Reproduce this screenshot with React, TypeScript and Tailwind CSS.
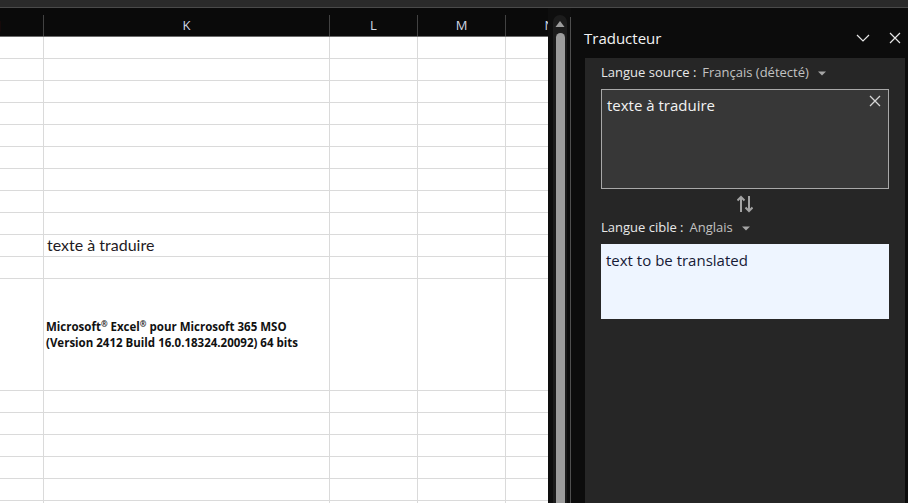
import React from 'react';

const GRID = 'grid grid-cols-[89px_286px_88px_88px_88px]';
const LABELS = ['J', 'K', 'L', 'M', 'N'];

function Row({ h, k }: { h: string; k?: React.ReactNode }) {
  return (
    <div className={GRID}>
      {LABELS.map((l) => (
        <div key={l} className={`${h} border-r border-b border-[#dadada] bg-white`}>
          {l === 'K' ? k : null}
        </div>
      ))}
    </div>
  );
}

function Sheet() {
  const rows: React.ReactNode[] = [];
  for (let i = 0; i < 11; i++) {
    rows.push(
      <Row
        key={`a${i}`}
        h="h-[22px]"
        k={
          i === 9 ? (
            <div className="flex h-full items-end pl-[3px] pb-[1px] text-[16px] leading-[20px] text-[#1f1b24] [font-family:Lato,'Liberation_Sans',sans-serif]">
              texte à traduire
            </div>
          ) : null
        }
      />
    );
  }
  rows.push(
    <Row
      key="big"
      h="h-[112px]"
      k={
        <div className="flex h-full flex-col justify-center pl-[2px] text-[11.5px] font-bold leading-[16px] text-[#111] [font-family:'Open_Sans',sans-serif]">
          <div>
            Microsoft<sup className="text-[8px]">®</sup> Excel<sup className="text-[8px]">®</sup> pour Microsoft 365 MSO
          </div>
          <div>(Version 2412 Build 16.0.18324.20092) 64 bits</div>
        </div>
      }
    />
  );
  for (let i = 0; i < 6; i++) rows.push(<Row key={`b${i}`} h="h-[22px]" />);

  return (
    <div className="w-[548px] overflow-hidden">
      <div className="ml-[-45px] w-[640px]">
        <div className={`${GRID} h-[29px] border-b border-[#6b6b6b] bg-[#0a0a0a]`}>
          {LABELS.map((l) => (
            <div key={l} className="flex">
              <div className="flex flex-1 items-end justify-center pb-[2px] text-[13px] leading-[18px] text-[#cfd6e2] [font-family:'Open_Sans',sans-serif]">
                {l}
              </div>
              <div className="mt-[7px] w-px bg-[#424242]" />
            </div>
          ))}
        </div>
        {rows}
      </div>
    </div>
  );
}

function ScrollBar() {
  return (
    <div className="flex w-[23px] bg-[#0e0e0e]">
      <div className="ml-[5px] mt-[7px] flex w-[14px] flex-col items-center rounded-t-full bg-[#1c1c1c]">
        <svg width="10" height="8" viewBox="0 0 10 8" className="mt-[5px]">
          <path d="M5 1 L9.5 7 L0.5 7 Z" fill="#9d9d9d" />
        </svg>
        <div className="mt-[5px] w-[9px] flex-1 rounded-t-full bg-[#9d9d9d]" />
      </div>
      <div className="ml-auto mt-[9px] w-px bg-[#4f4f4f]" />
    </div>
  );
}

function Caret() {
  return (
    <svg width="8" height="5" viewBox="0 0 8 5" className="ml-[9px] mt-[2px]">
      <path d="M0 0.5 L8 0.5 L4 4.5 Z" fill="#a6a6a6" />
    </svg>
  );
}

function Panel() {
  return (
    <div className="flex flex-1 flex-col bg-[#0c0c0c] [font-family:'Open_Sans',sans-serif]">
      <div className="flex h-[50px] items-center pl-[13px] pr-[6px] pt-[10px]">
        <div className="flex-1 text-[15px] leading-[20px] text-[#f3f3f3]">Traducteur</div>
        <svg width="14" height="8" viewBox="0 0 14 8" className="mr-[19px]">
          <path d="M1 1 L7 7 L13 1" stroke="#e6e6e6" strokeWidth="1.2" fill="none" />
        </svg>
        <svg width="12" height="12" viewBox="0 0 12 12" className="mr-[1px]">
          <path d="M1 1 L11 11 M11 1 L1 11" stroke="#e6e6e6" strokeWidth="1.2" fill="none" />
        </svg>
      </div>
      <div className="ml-[14px] flex w-[320px] flex-1 flex-col bg-[#262626] px-[16px] pt-[5px]">
        <div className="flex h-[18px] items-center text-[13px] leading-[18px]">
          <span className="text-[#e8e8e8]">Langue source :</span>
          <span className="ml-[6px] text-[#c2c2c2]">Français (détecté)</span>
          <Caret />
        </div>
        <div className="relative mt-[8px] h-[100px] border border-[#a8a8a8] bg-[#373737] pl-[5px] pt-[5px] text-[15px] leading-[20px] text-[#f2f2f2]">
          texte à traduire
          <svg width="12" height="12" viewBox="0 0 12 12" className="absolute right-[7px] top-[5px]">
            <path d="M1 1 L11 11 M11 1 L1 11" stroke="#d6d6d6" strokeWidth="1.3" fill="none" />
          </svg>
        </div>
        <div className="flex h-[29px] items-center justify-center">
          <svg width="16" height="18" viewBox="0 0 16 18">
            <path d="M4 17 V2 M0.5 5.5 L4 2 L7.5 5.5" stroke="#a3a3a3" strokeWidth="2" fill="none" />
            <path d="M12 1 V16 M8.5 12.5 L12 16 L15.5 12.5" stroke="#a3a3a3" strokeWidth="2" fill="none" />
          </svg>
        </div>
        <div className="flex h-[18px] items-center text-[13px] leading-[18px]">
          <span className="text-[#e8e8e8]">Langue cible :</span>
          <span className="ml-[6px] text-[#c2c2c2]">Anglais</span>
          <Caret />
        </div>
        <div className="mt-[8px] h-[75px] bg-[#eef5ff] pl-[5px] pt-[6px] text-[15px] leading-[20px] text-[#161a36]">
          text to be translated
        </div>
      </div>
    </div>
  );
}

export default function App() {
  return (
    <div className="flex h-[503px] w-[908px] flex-col overflow-hidden bg-[#0c0c0c]">
      <div className="h-[8px] border-b border-[#4a4a4a] bg-[#2a2a2a]" />
      <div className="flex min-h-0 flex-1">
        <Sheet />
        <ScrollBar />
        <Panel />
      </div>
    </div>
  );
}
